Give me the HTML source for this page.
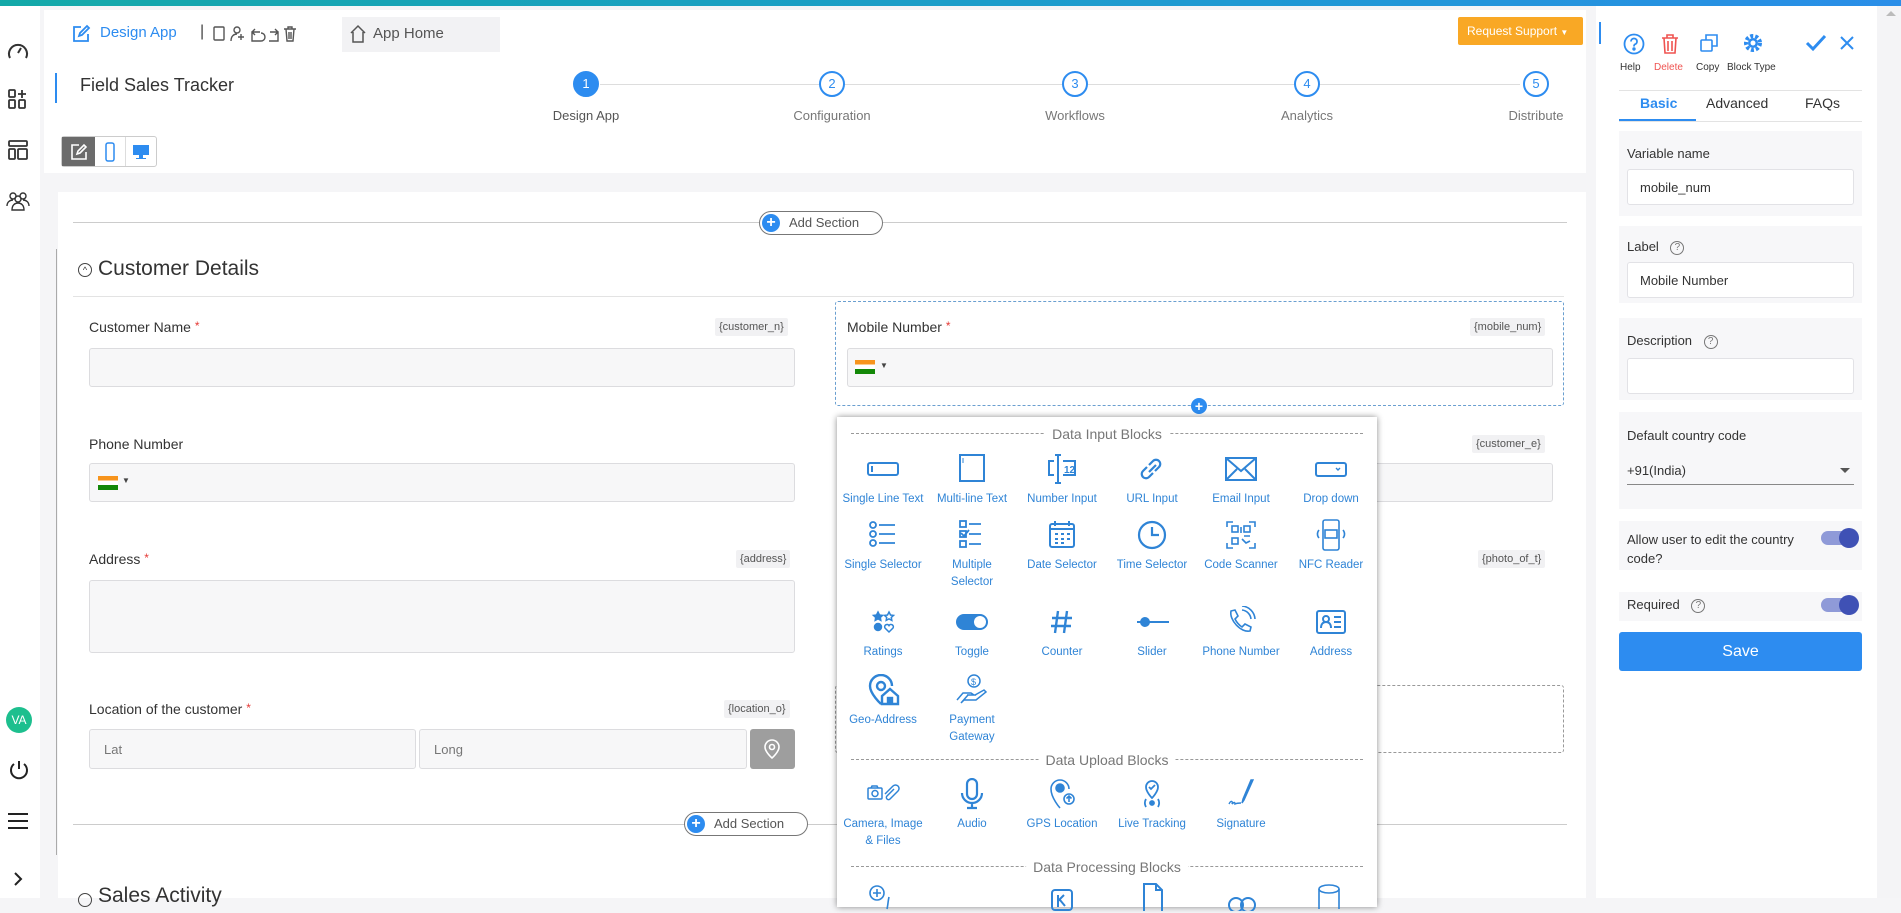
<!DOCTYPE html>
<html><head><meta charset="utf-8"><style>
*{box-sizing:border-box;margin:0;padding:0}
body{width:1901px;height:898px;overflow:hidden;background:#f5f5f7;font-family:"Liberation Sans",sans-serif;color:#333;position:relative}
.a{position:absolute}
.topbar{left:0;top:0;width:1901px;height:6px;background:linear-gradient(90deg,#14a9a8,#1e9bd0 60%,#2a8ee8)}
.side{left:0;top:6px;width:40px;height:892px;background:#fff}
.lbl{font-size:14px;color:#333}
.req{color:#e53935;font-size:12px;vertical-align:top}
.tag{font-size:11px;color:#555;background:#f1f1f3;padding:3px 4px;border-radius:2px}
.inp{background:#f7f7f8;border:1px solid #dcdcdf;border-radius:3px}
.flag{width:20px;height:14px;background:linear-gradient(#f7941d 0 33%,#fff 33% 66%,#138808 66%)}
.step{width:26px;height:26px;border-radius:50%;border:2px solid #2d8cf0;color:#2d8cf0;font-size:13px;text-align:center;line-height:22px;background:#fff}
.stl{font-size:13px;color:#777;width:140px;text-align:center}
.pi{position:absolute;width:90px;text-align:center;color:#2f84d6;font-size:11.5px;line-height:17px}
.pi svg{display:block;margin:0 auto 6px;width:34px;height:32px}
.ph{position:absolute;left:14px;width:512px;border-top:1px dashed #999;height:0}
.ph span{position:absolute;left:50%;transform:translate(-50%,-50%);background:#fff;padding:0 7px;font-size:14px;color:#777;white-space:nowrap}
.card{background:#f7f7f9;left:1619px;width:243px}
.pin{background:#fff;border:1px solid #e2e2e6;border-radius:3px;left:1627px;width:227px;font-size:13px;padding-left:12px;display:flex;align-items:center}
.q{display:inline-block;width:14px;height:14px;border:1.3px solid #777;border-radius:50%;font-size:10px;text-align:center;line-height:12px;color:#777;margin-left:8px;vertical-align:middle}
.tog{width:36px;height:14px;border-radius:7px;background:#8f9ad8}
.tog:after{content:"";position:absolute;right:-2px;top:-3px;width:20px;height:20px;border-radius:50%;background:#3f51b5}
</style></head><body>
<div class="a topbar"></div>
<div class="a side"></div>
<svg class="a" style="left:6px;top:39px" width="24" height="24" viewBox="0 0 24 24" fill="none" stroke="#333" stroke-width="2"><path d="M4 19A9 9 0 1 1 20 19"/><path d="M12 14l3-5"/></svg>
<svg class="a" style="left:7px;top:88px" width="22" height="22" viewBox="0 0 22 22" fill="none" stroke="#333" stroke-width="1.8"><rect x="2" y="2" width="6" height="7" rx="1"/><rect x="2" y="12" width="6" height="8" rx="1"/><rect x="12" y="12" width="6" height="8" rx="1"/><path d="M15 2v8M11 6h8"/></svg>
<svg class="a" style="left:7px;top:139px" width="22" height="22" viewBox="0 0 22 22" fill="none" stroke="#333" stroke-width="1.8"><rect x="2" y="2" width="18" height="5" rx="1"/><rect x="2" y="10" width="6" height="10" rx="1"/><rect x="11" y="10" width="9" height="10" rx="1"/></svg>
<svg class="a" style="left:5px;top:190px" width="26" height="22" viewBox="0 0 26 22" fill="none" stroke="#333" stroke-width="1.4"><circle cx="8" cy="6" r="3"/><circle cx="18" cy="6" r="3"/><circle cx="13" cy="9" r="3"/><path d="M2 16c0-4 3-6 6-6M24 16c0-4-3-6-6-6M7 20c0-5 3-7 6-7s6 2 6 7z"/></svg>
<div class="a" style="left:6px;top:707px;width:26px;height:26px;border-radius:50%;background:#1dbf8e;color:#fff;font-size:12px;text-align:center;line-height:26px">VA</div>
<svg class="a" style="left:8px;top:759px" width="22" height="22" viewBox="0 0 22 22" fill="none" stroke="#222" stroke-width="2"><path d="M11 2v8"/><path d="M6 5a8 8 0 1 0 10 0"/></svg>
<svg class="a" style="left:7px;top:812px" width="22" height="18" viewBox="0 0 22 18" stroke="#222" stroke-width="2"><path d="M1 2h20M1 9h20M1 16h20"/></svg>
<svg class="a" style="left:12px;top:871px" width="12" height="16" viewBox="0 0 12 16" fill="none" stroke="#222" stroke-width="2"><path d="M3 2l6 6-6 6"/></svg>

<div class="a" style="left:44px;top:10px;width:1542px;height:163px;background:#fff"></div>
<div class="a" style="left:342px;top:17px;width:158px;height:35px;background:#f2f2f4"></div>
<svg class="a" style="left:71px;top:24px" width="20" height="20" viewBox="0 0 20 20" fill="none" stroke="#2d8cf0" stroke-width="1.8"><path d="M10 3H3v14h14v-7"/><path d="M8 12l1-3 7-7 2 2-7 7z"/></svg>
<div class="a" style="left:100px;top:24px;font-size:15px;color:#2d8cf0">Design App</div>
<div class="a" style="left:200px;top:23px;font-size:16px;color:#444">|</div>
<svg class="a" style="left:212px;top:24px" width="100" height="20" viewBox="0 0 100 20" fill="none" stroke="#555" stroke-width="1.4"><rect x="2" y="3" width="10" height="13" rx="1"/><circle cx="25" cy="6" r="3"/><path d="M19 17c0-5 3-7 6-7M29 10v6M26 13h6"/><path d="M48 8h-8v9h9a4 4 0 0 0 0-8M40 8l3-3M40 8l3 3"/><path d="M58 8h8v9h-9M66 8l-3-3M66 8l-3 3"/><path d="M72 5h12M76 5V3h4v2M74 5l1 12h6l1-12M77 8v7M79 8v7"/></svg>
<svg class="a" style="left:349px;top:24px" width="18" height="20" viewBox="0 0 18 20" fill="none" stroke="#555" stroke-width="1.5"><path d="M2 9l7-7 7 7M4 8v10h10V8"/></svg>
<div class="a" style="left:373px;top:25px;font-size:15px;color:#555">App Home</div>
<div class="a" style="left:1458px;top:17px;width:125px;height:28px;background:#f9a825;border-radius:2px;color:#fff;font-size:12px;line-height:28px;padding-left:9px">Request Support <span style="font-size:8px">▼</span></div>

<div class="a" style="left:55px;top:73px;width:2px;height:30px;background:#2d8cf0"></div>
<div class="a" style="left:80px;top:75px;font-size:18px;color:#333">Field Sales Tracker</div>
<div class="a" style="left:600px;top:84px;width:920px;height:1px;background:#ddd"></div>
<div class="a step" style="left:573px;top:71px;background:#2d8cf0;color:#fff">1</div>
<div class="a step" style="left:819px;top:71px">2</div>
<div class="a step" style="left:1062px;top:71px">3</div>
<div class="a step" style="left:1294px;top:71px">4</div>
<div class="a step" style="left:1523px;top:71px">5</div>
<div class="a stl" style="left:516px;top:108px;color:#555">Design App</div>
<div class="a stl" style="left:762px;top:108px">Configuration</div>
<div class="a stl" style="left:1005px;top:108px">Workflows</div>
<div class="a stl" style="left:1237px;top:108px">Analytics</div>
<div class="a stl" style="left:1466px;top:108px">Distribute</div>
<div class="a" style="left:61px;top:136px;width:96px;height:31px;border:1px solid #ccc;border-radius:3px;background:#fff;display:flex">
<div style="width:33px;background:#6b6b6b;display:flex;align-items:center;justify-content:center"><svg width="18" height="18" viewBox="0 0 18 18" fill="none" stroke="#fff" stroke-width="1.6"><path d="M9 2H2v14h14V9"/><path d="M7 11l1-3 6-6 2 2-6 6z"/></svg></div>
<div style="width:31px;border-right:1px solid #ddd;display:flex;align-items:center;justify-content:center"><svg width="10" height="20" viewBox="0 0 10 20" fill="none" stroke="#2d8cf0" stroke-width="1.5"><rect x="1" y="1" width="8" height="18" rx="2"/></svg></div>
<div style="flex:1;display:flex;align-items:center;justify-content:center"><svg width="18" height="18" viewBox="0 0 18 18"><rect x="1" y="2" width="16" height="10" fill="#2d8cf0"/><path d="M7 12h4v3h3v1H4v-1h3z" fill="#2d8cf0"/></svg></div>
</div>

<div class="a" style="left:58px;top:192px;width:1528px;height:706px;background:#fff"></div>
<div class="a" style="left:73px;top:222px;width:1494px;height:1px;background:#ccc"></div>
<div class="a" style="left:759px;top:211px;width:124px;height:24px;border:1px solid #777;border-radius:12px;background:#fff;font-size:13px;color:#555;line-height:22px;padding-left:29px">Add Section</div>
<div class="a" style="left:762px;top:214px;width:18px;height:18px;border-radius:50%;background:#2d8cf0;color:#fff;font-size:16px;line-height:18px;text-align:center;font-weight:bold">+</div>
<div class="a" style="left:56px;top:249px;width:1px;height:606px;background:#aaa"></div>
<div class="a" style="left:78px;top:263px;width:14px;height:14px;border:1px solid #444;border-radius:50%;font-size:9px;text-align:center;line-height:12px">^</div>
<div class="a" style="left:98px;top:257px;font-size:21px;color:#333">Customer Details</div>
<div class="a" style="left:73px;top:296px;width:1491px;height:1px;background:#e3e3e3"></div>

<div class="a lbl" style="left:89px;top:319px">Customer Name <span class="req">*</span></div>
<div class="a tag" style="left:715px;top:318px">{customer_n}</div>
<div class="a inp" style="left:89px;top:348px;width:706px;height:39px"></div>
<div class="a lbl" style="left:89px;top:436px">Phone Number</div>
<div class="a inp" style="left:89px;top:463px;width:706px;height:39px"></div>
<div class="a flag" style="left:98px;top:476px"></div><div class="a" style="left:122px;top:476px;font-size:8px;color:#444">▼</div>
<div class="a lbl" style="left:89px;top:551px">Address <span class="req">*</span></div>
<div class="a tag" style="left:736px;top:550px">{address}</div>
<div class="a inp" style="left:89px;top:580px;width:706px;height:73px"></div>
<div class="a lbl" style="left:89px;top:701px">Location of the customer <span class="req">*</span></div>
<div class="a tag" style="left:724px;top:700px">{location_o}</div>
<div class="a inp" style="left:89px;top:729px;width:327px;height:40px;font-size:13px;color:#777;padding:12px 14px">Lat</div>
<div class="a inp" style="left:419px;top:729px;width:328px;height:40px;font-size:13px;color:#777;padding:12px 14px">Long</div>
<div class="a" style="left:750px;top:729px;width:45px;height:40px;background:#9e9e9e;border-radius:3px"></div>
<svg class="a" style="left:763px;top:739px" width="18" height="20" viewBox="0 0 18 20" fill="none" stroke="#fff" stroke-width="1.6"><path d="M9 19s-7-6-7-11a7 7 0 0 1 14 0c0 5-7 11-7 11z"/><circle cx="9" cy="8" r="2.5"/></svg>

<div class="a" style="left:835px;top:301px;width:729px;height:105px;border:1px dashed #6a9fd0;border-radius:3px"></div>
<div class="a lbl" style="left:847px;top:319px">Mobile Number <span class="req">*</span></div>
<div class="a tag" style="left:1470px;top:318px">{mobile_num}</div>
<div class="a inp" style="left:847px;top:348px;width:706px;height:39px"></div>
<div class="a flag" style="left:855px;top:360px"></div><div class="a" style="left:880px;top:361px;font-size:8px;color:#444">▼</div>
<div class="a" style="left:1191px;top:398px;width:16px;height:16px;border-radius:50%;background:#2d8cf0;color:#fff;font-size:14px;font-weight:bold;line-height:16px;text-align:center">+</div>
<div class="a tag" style="left:1472px;top:435px">{customer_e}</div>
<div class="a inp" style="left:1370px;top:463px;width:183px;height:39px"></div>
<div class="a tag" style="left:1478px;top:550px">{photo_of_t}</div>
<div class="a" style="left:835px;top:685px;width:729px;height:68px;border:1px dashed #999;border-radius:3px"></div>

<div class="a" style="left:73px;top:824px;width:1494px;height:1px;background:#ccc"></div>
<div class="a" style="left:684px;top:812px;width:124px;height:24px;border:1px solid #777;border-radius:12px;background:#fff;font-size:13px;color:#555;line-height:22px;padding-left:29px">Add Section</div>
<div class="a" style="left:687px;top:815px;width:18px;height:18px;border-radius:50%;background:#2d8cf0;color:#fff;font-size:16px;line-height:18px;text-align:center;font-weight:bold">+</div>
<div class="a" style="left:78px;top:893px;width:14px;height:14px;border:1px solid #444;border-radius:50%"></div>
<div class="a" style="left:98px;top:884px;font-size:21px;color:#333">Sales Activity</div>

<div class="a" style="left:837px;top:417px;width:540px;height:490px;background:#fff;box-shadow:0 0 6px rgba(0,0,0,.45)">
<div class="ph" style="top:16px"><span>Data Input Blocks</span></div>
<div class="pi" style="left:1px;top:36px"><svg viewBox="0 0 34 32" fill="none" stroke="#2f84d6" stroke-width="2"><rect x="2" y="10" width="30" height="12" rx="2"/><path d="M6 13v6"/></svg>Single Line Text</div>
<div class="pi" style="left:90px;top:36px"><svg viewBox="0 0 34 32" fill="none" stroke="#2f84d6" stroke-width="2"><rect x="5" y="2" width="24" height="26"/><path d="M8 5v5" stroke-width="1"/></svg>Multi-line Text</div>
<div class="pi" style="left:180px;top:36px"><svg viewBox="0 0 34 32" fill="none" stroke="#2f84d6" stroke-width="2"><path d="M10 2h6M13 2v28M10 30h6M9 8H4v14h5M18 8h12v14H18"/><text x="19" y="20" font-size="10" fill="#2f84d6" stroke="none" font-family="Liberation Sans" font-weight="bold">12</text></svg>Number Input</div>
<div class="pi" style="left:270px;top:36px"><svg viewBox="0 0 34 32" fill="none" stroke="#2f84d6" stroke-width="2.2"><path d="M14 19l7-7M12 14l-4 4a4 4 0 0 0 6 6l4-4M20 18l4-4a4 4 0 0 0-6-6l-4 4"/></svg>URL Input</div>
<div class="pi" style="left:359px;top:36px"><svg viewBox="0 0 34 32" fill="none" stroke="#2f84d6" stroke-width="2"><rect x="2" y="5" width="30" height="22"/><path d="M2 5l15 13 15-13M2 27l11-11M32 27L21 16"/></svg>Email Input</div>
<div class="pi" style="left:449px;top:36px"><svg viewBox="0 0 34 32" fill="none" stroke="#2f84d6" stroke-width="2"><rect x="2" y="10" width="30" height="13" rx="2"/><path d="M22 15l2 2 2-2" stroke-width="1.4"/></svg>Drop down</div>

<div class="pi" style="left:1px;top:102px"><svg viewBox="0 0 34 32" fill="none" stroke="#2f84d6" stroke-width="1.8"><circle cx="7" cy="6" r="3"/><circle cx="7" cy="15" r="3"/><circle cx="7" cy="24" r="3"/><path d="M13 6h16M13 15h16M13 24h16"/></svg>Single Selector</div>
<div class="pi" style="left:90px;top:102px"><svg viewBox="0 0 34 32" fill="none" stroke="#2f84d6" stroke-width="1.8"><rect x="5" y="2" width="6" height="6"/><rect x="5" y="12" width="6" height="6"/><rect x="5" y="22" width="6" height="6"/><path d="M14 5h12M14 15h12M14 25h12M6 14l3 3 5-6"/></svg>Multiple<br>Selector</div>
<div class="pi" style="left:180px;top:102px"><svg viewBox="0 0 34 32" fill="none" stroke="#2f84d6" stroke-width="2"><rect x="5" y="5" width="24" height="23" rx="2"/><path d="M5 10h24M10 2v5M24 2v5M10 15h3M16 15h3M22 15h3M10 20h3M16 20h3M22 20h3M10 24h3M16 24h3"/></svg>Date Selector</div>
<div class="pi" style="left:270px;top:102px"><svg viewBox="0 0 34 32" fill="none" stroke="#2f84d6" stroke-width="2.2"><circle cx="17" cy="16" r="13"/><path d="M17 8v8h7"/></svg>Time Selector</div>
<div class="pi" style="left:359px;top:102px"><svg viewBox="0 0 34 32" fill="none" stroke="#2f84d6" stroke-width="1.6"><path d="M3 8V3h6M25 3h6v5M31 24v5h-6M9 29H3v-5"/><rect x="8" y="7" width="6" height="6"/><rect x="20" y="7" width="6" height="6"/><rect x="8" y="19" width="6" height="6"/><path d="M17 8v6M20 17h6M18 20l4 4 4-2"/></svg>Code Scanner</div>
<div class="pi" style="left:449px;top:102px"><svg viewBox="0 0 34 32" fill="none" stroke="#2f84d6" stroke-width="1.6"><rect x="9" y="1" width="16" height="30" rx="2"/><rect x="11" y="11" width="12" height="8"/><path d="M5 11a6 6 0 0 0 0 8M29 11a6 6 0 0 1 0 8"/></svg>NFC Reader</div>

<div class="pi" style="left:1px;top:189px"><svg viewBox="0 0 34 32" fill="none" stroke="#2f84d6" stroke-width="1.5"><path d="M12 6l1.5 3 3 .4-2.2 2 .5 3-2.8-1.5-2.8 1.5.5-3-2.2-2 3-.4z" fill="#2f84d6"/><path d="M23 6l1.5 3 3 .4-2.2 2 .5 3-2.8-1.5-2.8 1.5.5-3-2.2-2 3-.4z"/><circle cx="12" cy="21" r="3.5" fill="#2f84d6"/><path d="M23 26l-4-4a2.3 2.3 0 0 1 4-2.4 2.3 2.3 0 0 1 4 2.4z"/></svg>Ratings</div>
<div class="pi" style="left:90px;top:189px"><svg viewBox="0 0 34 32"><rect x="1" y="8" width="32" height="16" rx="8" fill="#2f84d6"/><circle cx="25" cy="16" r="6" fill="#fff"/></svg>Toggle</div>
<div class="pi" style="left:180px;top:189px"><svg viewBox="0 0 34 32" fill="none" stroke="#2f84d6" stroke-width="2.4"><path d="M13 5l-3 22M22 5l-3 22M7 12h20M6 20h20"/></svg>Counter</div>
<div class="pi" style="left:270px;top:189px"><svg viewBox="0 0 34 32" fill="none" stroke="#2f84d6" stroke-width="2"><path d="M2 16h32"/><circle cx="10" cy="16" r="4" fill="#2f84d6"/></svg>Slider</div>
<div class="pi" style="left:359px;top:189px"><svg viewBox="0 0 34 32" fill="none" stroke="#2f84d6" stroke-width="1.6"><path d="M7 5l4-1 3 6-3 3c2 4 4 6 7 8l3-3 6 3-1 4c-9 2-21-11-19-20z"/><path d="M18 4a10 10 0 0 1 9 9M18 0a14 14 0 0 1 13 13"/></svg>Phone Number</div>
<div class="pi" style="left:449px;top:189px"><svg viewBox="0 0 34 32" fill="none" stroke="#2f84d6" stroke-width="2"><rect x="3" y="5" width="28" height="22" rx="2"/><circle cx="12" cy="13" r="3"/><path d="M7 22c0-4 2-6 5-6s5 2 5 6M20 11h7M20 16h7M20 21h7"/></svg>Address</div>

<div class="pi" style="left:1px;top:257px"><svg viewBox="0 0 34 32" fill="none" stroke="#2f84d6" stroke-width="2.4"><path d="M15 30S4 20 4 12a11 11 0 0 1 22 0"/><circle cx="15" cy="12" r="4"/><path d="M16 22l8-7 8 7v8H16z" fill="#fff"/><rect x="22" y="24" width="4" height="4" fill="#2f84d6"/></svg>Geo-Address</div>
<div class="pi" style="left:90px;top:257px"><svg viewBox="0 0 34 32" fill="none" stroke="#2f84d6" stroke-width="1.5"><circle cx="19" cy="7" r="6"/><text x="16" y="11" font-size="9" fill="#2f84d6" stroke="none" font-family="Liberation Sans">$</text><path d="M2 26l6-7h8l3 2h-7M13 21h7l9-5 2 2-10 8H9l-3 3z"/></svg>Payment<br>Gateway</div>

<div class="ph" style="top:342px"><span>Data Upload Blocks</span></div>
<div class="pi" style="left:1px;top:361px"><svg viewBox="0 0 34 32" fill="none" stroke="#2f84d6" stroke-width="1.5" style="width:40px"><rect x="2" y="10" width="14" height="11" rx="1"/><circle cx="9" cy="15.5" r="3"/><path d="M5 10l1-2h5l1 2M28 11l-7 7a2 2 0 0 0 3 3l8-8a3.5 3.5 0 0 0-5-5l-8 8"/></svg>Camera, Image<br>&amp; Files</div>
<div class="pi" style="left:90px;top:361px"><svg viewBox="0 0 34 32" fill="none" stroke="#2f84d6" stroke-width="2.2"><rect x="12" y="1" width="10" height="20" rx="5"/><path d="M7 15a10 10 0 0 0 20 0M17 25v5M12 30h10"/></svg>Audio</div>
<div class="pi" style="left:180px;top:361px"><svg viewBox="0 0 34 32" fill="none" stroke="#2f84d6" stroke-width="1.6"><path d="M15 30S6 20 6 11a9 9 0 0 1 18 0"/><circle cx="15" cy="10" r="4" fill="#2f84d6"/><circle cx="24" cy="21" r="5" fill="#fff"/><path d="M24 24v-6M21.5 20.5L24 18l2.5 2.5"/></svg>GPS Location</div>
<div class="pi" style="left:270px;top:361px"><svg viewBox="0 0 34 32" fill="none" stroke="#2f84d6" stroke-width="1.8"><path d="M17 20s-6-6-6-11a6 6 0 0 1 12 0c0 5-6 11-6 11z"/><path d="M14 9l2 2 4-4"/><circle cx="17" cy="25" r="2" fill="#2f84d6"/><path d="M11 21a8 8 0 0 0 0 8M23 21a8 8 0 0 1 0 8"/></svg>Live Tracking</div>
<div class="pi" style="left:359px;top:361px"><svg viewBox="0 0 34 32" fill="none" stroke="#2f84d6" stroke-width="1.4"><path d="M29 2l-9 20-2 3 1-4 8-19z" fill="#2f84d6"/><path d="M5 26c2-4 4-3 3 0 2-2 3-2 3 0 2-1 4-1 6-1"/></svg>Signature</div>

<div class="ph" style="top:449px"><span>Data Processing Blocks</span></div>
<svg class="a" style="left:30px;top:466px" width="34" height="30" viewBox="0 0 34 30" fill="none" stroke="#2f84d6" stroke-width="1.6"><circle cx="10" cy="10" r="7"/><path d="M10 6v8M6 10h8M22 14c-1 4-1 8-2 12"/></svg>
<svg class="a" style="left:210px;top:470px" width="30" height="26" viewBox="0 0 30 26" fill="none" stroke="#2f84d6" stroke-width="2"><rect x="5" y="3" width="20" height="20" rx="3"/><path d="M11 8v12M11 14l6-6M13 13l5 6"/></svg>
<svg class="a" style="left:302px;top:464px" width="28" height="30" viewBox="0 0 28 30" fill="none" stroke="#2f84d6" stroke-width="2"><path d="M5 30V3h12l6 6v21M17 3v6h6"/></svg>
<svg class="a" style="left:385px;top:474px" width="40" height="20" viewBox="0 0 40 20" fill="none" stroke="#2f84d6" stroke-width="2"><circle cx="14" cy="14" r="7"/><circle cx="26" cy="14" r="7"/></svg>
<svg class="a" style="left:478px;top:466px" width="28" height="30" viewBox="0 0 28 30" fill="none" stroke="#2f84d6" stroke-width="1.6"><ellipse cx="14" cy="6" rx="10" ry="4"/><path d="M4 6v20M24 6v20"/></svg>
</div>

<div class="a" style="left:1596px;top:6px;width:281px;height:892px;background:#fff"></div>
<div class="a" style="left:1877px;top:6px;width:24px;height:892px;background:#f4f4f6"></div>
<div class="a" style="left:1886px;top:11px;width:0;height:0;border-left:5px solid transparent;border-right:5px solid transparent;border-bottom:5px solid #bbb"></div>
<div class="a" style="left:1599px;top:22px;width:2px;height:22px;background:#2d8cf0"></div>
<svg class="a" style="left:1623px;top:33px" width="22" height="22" viewBox="0 0 22 22" fill="none" stroke="#2d8cf0" stroke-width="1.8"><circle cx="11" cy="11" r="9.5"/><path d="M8 8.5a3 3 0 1 1 4 2.8c-1 .4-1 1-1 2.2"/><circle cx="11" cy="16" r=".8" fill="#2d8cf0"/></svg>
<svg class="a" style="left:1660px;top:33px" width="20" height="22" viewBox="0 0 20 22" fill="none" stroke="#ef5350" stroke-width="1.6"><path d="M2 5h16M7 5V2h6v3M4 5l1 15h10l1-15M8 8v10M12 8v10"/></svg>
<svg class="a" style="left:1699px;top:33px" width="20" height="20" viewBox="0 0 20 20" fill="none" stroke="#2d8cf0" stroke-width="1.6"><rect x="2" y="7" width="11" height="11" rx="1"/><path d="M7 7V2h11v11h-5"/></svg>
<svg class="a" style="left:1743px;top:33px" width="20" height="20" viewBox="0 0 20 20"><circle cx="10" cy="10" r="7" fill="none" stroke="#2d8cf0" stroke-width="4" stroke-dasharray="3 2"/><circle cx="10" cy="10" r="5" fill="#2d8cf0"/><circle cx="10" cy="10" r="2.5" fill="#fff"/></svg>
<svg class="a" style="left:1804px;top:33px" width="24" height="20" viewBox="0 0 24 20" fill="none" stroke="#2d8cf0" stroke-width="3"><path d="M3 10l6 6L21 3"/></svg>
<svg class="a" style="left:1840px;top:36px" width="14" height="14" viewBox="0 0 14 14" stroke="#2d8cf0" stroke-width="2"><path d="M1 1l12 12M13 1L1 13"/></svg>
<div class="a" style="left:1620px;top:62px;font-size:10px;color:#333">Help</div>
<div class="a" style="left:1654px;top:62px;font-size:10px;color:#ef5350">Delete</div>
<div class="a" style="left:1696px;top:62px;font-size:10px;color:#333">Copy</div>
<div class="a" style="left:1727px;top:62px;font-size:10px;color:#333">Block Type</div>
<div class="a" style="left:1619px;top:121px;width:243px;height:1px;background:#e3e3e3"></div>
<div class="a" style="left:1619px;top:90px;width:243px;height:1px;background:#e3e3e3"></div>
<div class="a" style="left:1619px;top:119px;width:77px;height:2px;background:#2d8cf0"></div>
<div class="a" style="left:1640px;top:95px;font-size:14px;color:#2d8cf0;font-weight:bold">Basic</div>
<div class="a" style="left:1706px;top:95px;font-size:14px;color:#333">Advanced</div>
<div class="a" style="left:1805px;top:95px;font-size:14px;color:#333">FAQs</div>

<div class="a card" style="top:131px;height:85px"></div>
<div class="a" style="left:1627px;top:146px;font-size:13px">Variable name</div>
<div class="a pin" style="top:169px;height:36px">mobile_num</div>
<div class="a card" style="top:226px;height:77px"></div>
<div class="a" style="left:1627px;top:239px;font-size:13px">Label <span class="q">?</span></div>
<div class="a pin" style="top:262px;height:36px">Mobile Number</div>
<div class="a card" style="top:318px;height:82px"></div>
<div class="a" style="left:1627px;top:333px;font-size:13px">Description <span class="q">?</span></div>
<div class="a pin" style="top:358px;height:36px"></div>
<div class="a card" style="top:412px;height:97px"></div>
<div class="a" style="left:1627px;top:428px;font-size:13px">Default country code</div>
<div class="a" style="left:1627px;top:463px;font-size:13px">+91(India)</div>
<div class="a" style="left:1840px;top:468px;width:0;height:0;border-left:5px solid transparent;border-right:5px solid transparent;border-top:5px solid #555"></div>
<div class="a" style="left:1627px;top:484px;width:227px;height:1px;background:#888"></div>
<div class="a card" style="top:521px;height:49px"></div>
<div class="a" style="left:1627px;top:530px;font-size:13px;line-height:19px;width:200px">Allow user to edit the country code?</div>
<div class="a tog" style="left:1821px;top:531px"></div>
<div class="a card" style="top:592px;height:29px"></div>
<div class="a" style="left:1627px;top:597px;font-size:13px">Required <span class="q">?</span></div>
<div class="a tog" style="left:1821px;top:598px"></div>
<div class="a" style="left:1619px;top:632px;width:243px;height:39px;background:#2d8cf0;border-radius:3px;color:#fff;font-size:16px;text-align:center;line-height:39px">Save</div>
</body></html>
